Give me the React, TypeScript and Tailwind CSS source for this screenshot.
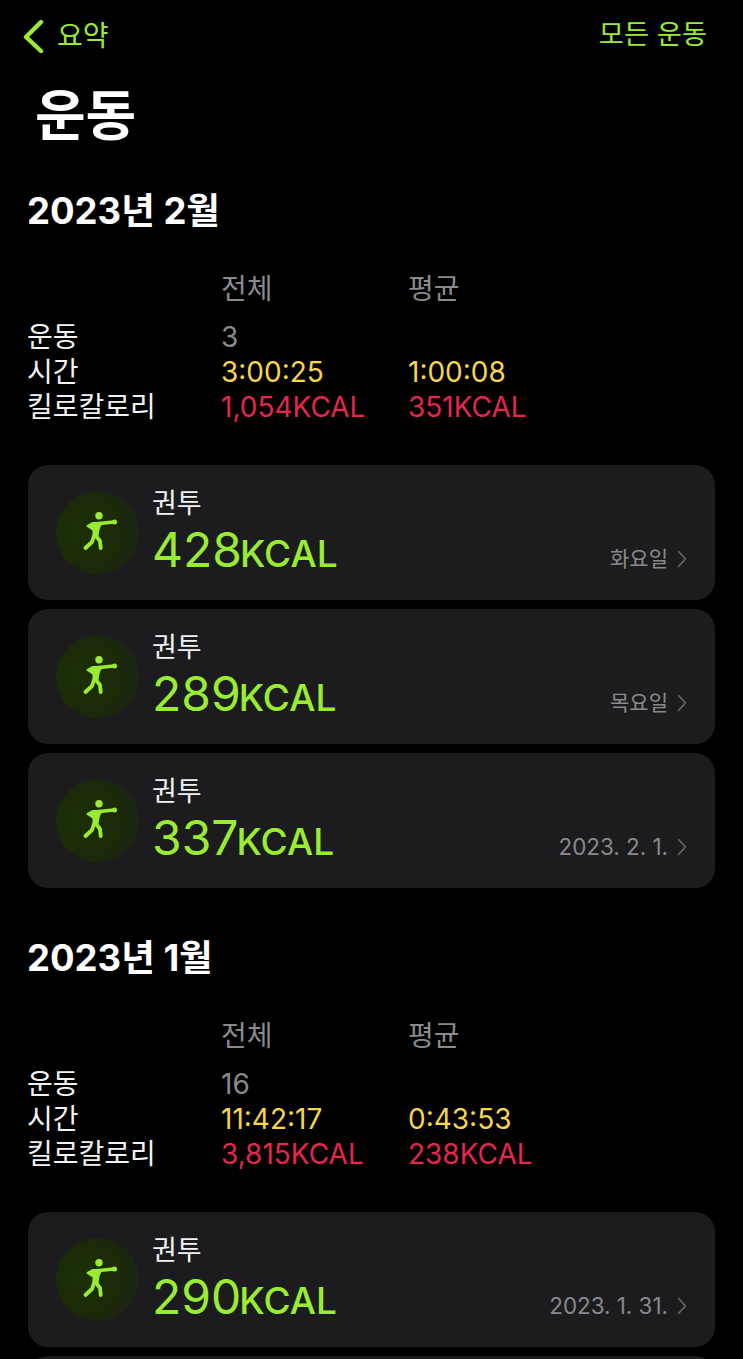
const font = { fontFamily: '"Inter", "Noto Sans CJK KR", sans-serif' };
const lime = "#9aec32";

const Boxer = () => (
  <svg viewBox="0 0 83 83" className="w-[83px] h-[83px]" fill="none" stroke={lime} strokeLinecap="round" strokeLinejoin="round">
    <circle cx="43" cy="24.7" r="3.7" fill={lime} stroke="none" />
    <path d="M38 33 L58 31" strokeWidth="3.6" />
    <circle cx="58.5" cy="31" r="2.5" fill={lime} stroke="none" />
    <path d="M31.5 35 L37 32 L45 32 L42.5 38 L41.5 45 L37.5 45 L37.5 39 Z" fill={lime} strokeWidth="2" />
    <path d="M40 45 L44 50 L44.7 57" strokeWidth="3.8" />
    <path d="M38 45 L36 51 L29.5 57" strokeWidth="3.8" />
  </svg>
);

type Workout = { kcal: string; date: string };

const Card = ({ kcal, date }: Workout) => (
  <div className="h-[135px] rounded-[20px] bg-[#1c1c1e] flex items-center pl-[28px] pr-[28px]">
    <div className="w-[83px] h-[83px] rounded-full shrink-0 bg-[radial-gradient(circle_at_35%_50%,#1b3004_0%,#1b2a08_50%,#1d2119_100%)]">
      <Boxer />
    </div>
    <div className="ml-[14px] self-start pt-[24px] flex flex-col">
      <div className="-ml-[1px] text-[27px] leading-[30px] text-[#f2f2f2]">권투</div>
      <div className="-ml-[1px] mt-[5px] flex items-baseline text-[#9aec32] leading-[52px]">
        <span className="text-[48px] mr-[-2px]">{kcal}</span>
        <span className="text-[37px] font-[450]">KCAL</span>
      </div>
    </div>
    <div className="ml-auto self-end mb-[26px] flex items-center gap-[9px] leading-[30px] text-[#8a8a8e]">
      <span className={/^\d/.test(date) ? "text-[22.4px]" : "text-[21px]"}>{date}</span>
      <svg viewBox="0 0 10 18" className="w-[10px] h-[18px]" fill="none" stroke="#68686c" strokeWidth="1.6" strokeLinecap="round" strokeLinejoin="round">
        <path d="M1.5 1.5 L8.5 9 L1.5 16.5" />
      </svg>
    </div>
  </div>
);

type Stats = {
  title: string;
  count: string;
  time: string[];
  kcal: string[];
  workouts: Workout[];
  more?: boolean;
};

const Section = ({ title, count, time, kcal, workouts, more }: Stats) => (
  <section className="px-[28px]">
    <h2 className="text-[36.5px] leading-[44px] font-bold text-white -ml-[1px]">{title}</h2>
    <div className="mt-[39px] -ml-[1px] grid grid-cols-[194px_187px_1fr] text-[28px] leading-[35px]">
      <div />
      <div className="text-[#8a8a8e] mb-[13px]">전체</div>
      <div className="text-[#8a8a8e] mb-[13px]">평균</div>
      <div className="text-[#f2f2f2]">운동</div>
      <div className="text-[#8a8a8e]">{count}</div>
      <div />
      <div className="text-[#f2f2f2]">시간</div>
      <div className="text-[#f7d64a]">{time[0]}</div>
      <div className="text-[#f7d64a]">{time[1]}</div>
      <div className="text-[#f2f2f2]">킬로칼로리</div>
      <div className="text-[#e5264f]">{kcal[0]}</div>
      <div className="text-[#e5264f]">{kcal[1]}</div>
    </div>
    <div className="mt-[40px] flex flex-col gap-[9px]">
      {workouts.map((w, i) => (
        <Card key={i} {...w} />
      ))}
      {more && <div className="h-[135px] rounded-[20px] bg-[#1c1c1e]" />}
    </div>
  </section>
);

export default function App() {
  return (
    <div className="h-[1359px] overflow-hidden bg-black" style={font}>
      <header className="h-[71px] pl-[22px] pr-[36px] flex items-center justify-between">
        <div className="flex items-center gap-[13px] text-[#9aec32] text-[28px]">
          <svg viewBox="0 0 22 34" className="w-[22px] h-[34px]" fill="none" stroke={lime} strokeWidth="4.4" strokeLinecap="round" strokeLinejoin="round">
            <path d="M19 3 L4 18 L19 32" />
          </svg>
          <span>요약</span>
        </div>
        <span className="text-[#9aec32] text-[27.3px]">모든 운동</span>
      </header>
      <h1 className="pl-[35px] text-[55px] leading-[60px] font-bold text-white mt-[14px]">운동</h1>
      <div className="mt-[44px] flex flex-col gap-[48px]">
        <Section
          title="2023년 2월"
          count="3"
          time={["3:00:25", "1:00:08"]}
          kcal={["1,054KCAL", "351KCAL"]}
          workouts={[
            { kcal: "428", date: "화요일" },
            { kcal: "289", date: "목요일" },
            { kcal: "337", date: "2023. 2. 1." },
          ]}
        />
        <Section
          title="2023년 1월"
          count="16"
          time={["11:42:17", "0:43:53"]}
          kcal={["3,815KCAL", "238KCAL"]}
          workouts={[{ kcal: "290", date: "2023. 1. 31." }]}
          more
        />
      </div>
    </div>
  );
}
